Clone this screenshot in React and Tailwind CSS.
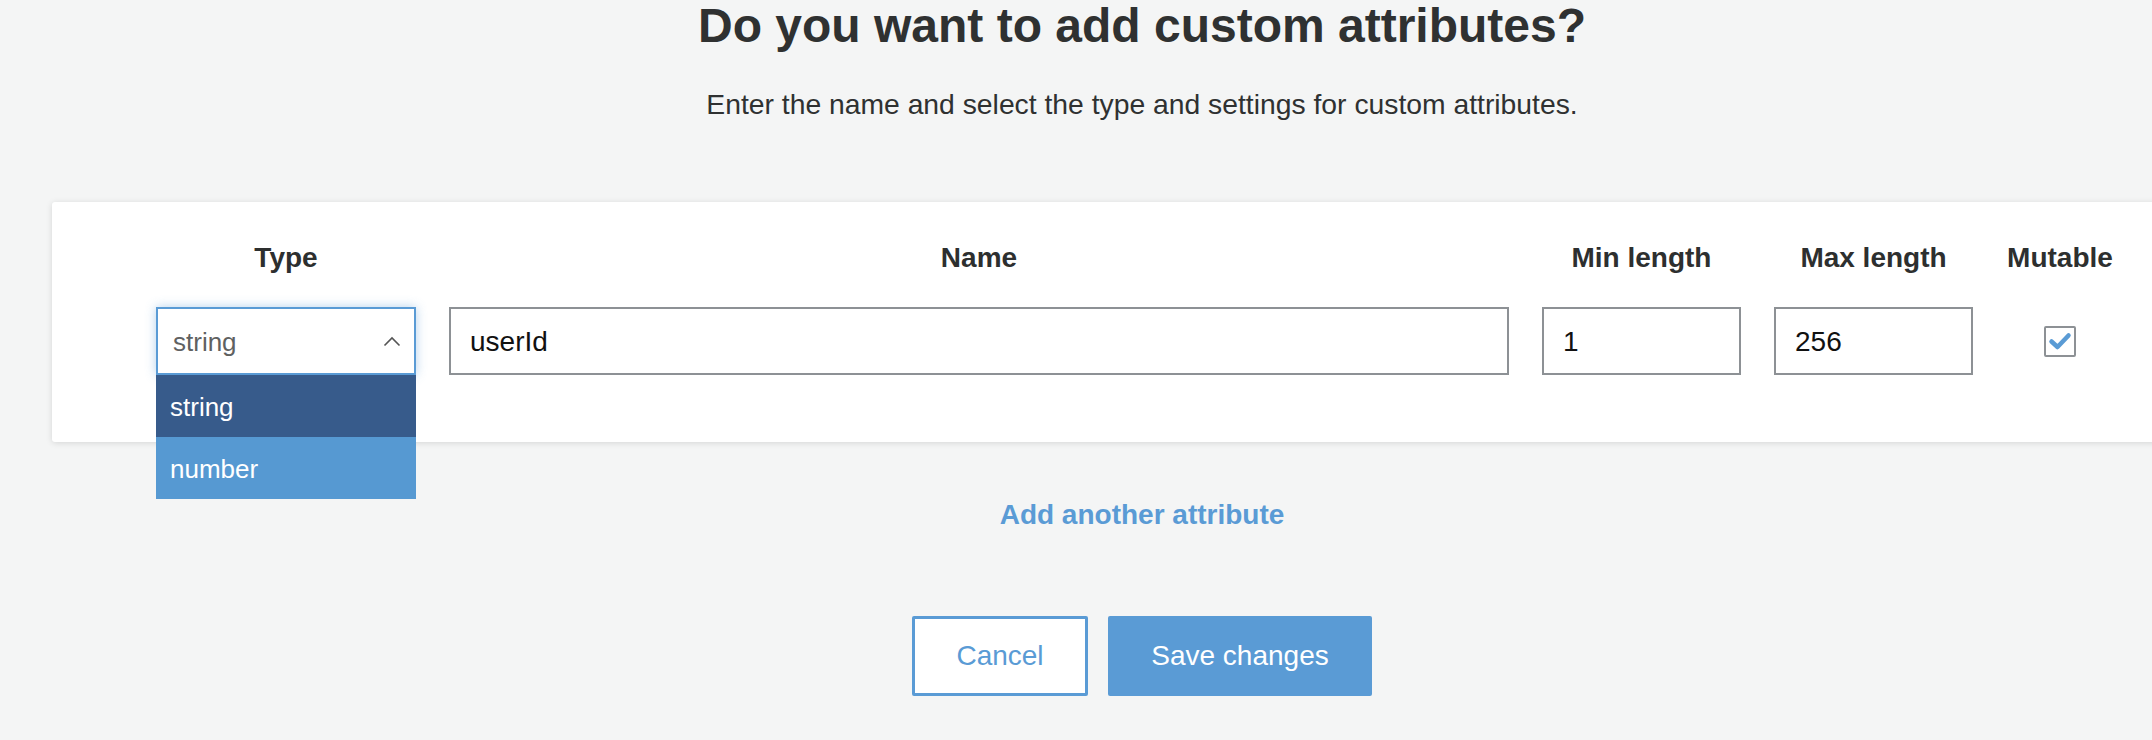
import React from "react";

const FONT = { fontFamily: '"Liberation Sans", Arial, Helvetica, sans-serif' };

function Header({ children }) {
  return (
    <div className="text-center text-[28px] leading-[32px] font-bold text-[#2d2f2f] whitespace-nowrap">
      {children}
    </div>
  );
}

function TextInput({ value }) {
  return (
    <div className="h-[68px] border-2 border-[#8d9195] bg-white flex items-center pl-[19px] pt-[2px] text-[28px] text-[#111]">
      {value}
    </div>
  );
}

export default function App() {
  return (
    <div className="w-full min-h-[740px] bg-[#f4f5f5] overflow-hidden" style={FONT}>
      <div className="w-[2180px] ml-[52px] flex flex-col items-center">
        <h1 className="pt-[2px] text-[48px] leading-[48px] font-bold text-[#2f3131] whitespace-nowrap">
          Do you want to add custom attributes?
        </h1>
        <p className="mt-[38px] text-[28.3px] leading-[32px] text-[#2f3131] whitespace-nowrap">
          Enter the name and select the type and settings for custom attributes.
        </p>

        <div className="mt-[82px] w-full bg-white rounded-[3px] shadow-[0_1px_6px_rgba(0,0,0,0.13)] pl-[104px] pt-[40px] pb-[67px]">
          <div className="grid grid-cols-[260px_1060px_199px_199px_108px] gap-x-[33px] gap-y-[33px]">
            <Header>Type</Header>
            <Header>Name</Header>
            <Header>Min length</Header>
            <Header>Max length</Header>
            <Header>Mutable</Header>

            <div className="relative">
              <div className="h-[68px] border-2 border-[#5a9bd5] bg-white shadow-[0_0_10px_rgba(90,155,213,0.45)] flex items-center justify-between pl-[15px] pr-[13px] text-[26px] text-[#5f6161]">
                <span className="pt-[3px]">string</span>
                <svg width="18" height="11" viewBox="0 0 18 11" fill="none">
                  <polyline points="1.5,9.5 9,2 16.5,9.5" stroke="#555" strokeWidth="1.6" />
                </svg>
              </div>
              <div className="absolute left-0 top-full w-full z-10">
                <div className="h-[62px] bg-[#375b8b] text-white text-[26px] flex items-center pl-[14px] pt-[3px]">
                  string
                </div>
                <div className="h-[62px] bg-[#5699d2] text-white text-[26px] flex items-center pl-[14px] pt-[3px]">
                  number
                </div>
              </div>
            </div>

            <TextInput value="userId" />
            <TextInput value="1" />
            <TextInput value="256" />

            <div className="h-[68px] flex items-center justify-center">
              <div className="w-[32px] h-[31px] border-2 border-[#8d9195] rounded-[2px] bg-white flex items-center justify-center">
                <svg width="24" height="20" viewBox="0 0 24 20" fill="none">
                  <polyline
                    points="3.5,10.5 9.5,16 20.5,4.5"
                    stroke="#5a9bd5"
                    strokeWidth="4.5"
                    strokeLinecap="round"
                    strokeLinejoin="round"
                  />
                </svg>
              </div>
            </div>
          </div>
        </div>

        <button className="mt-[57px] text-[28px] leading-[32px] font-bold text-[#5a9bd5] whitespace-nowrap">
          Add another attribute
        </button>

        <div className="mt-[85px] flex gap-[20px]">
          <button className="w-[176px] h-[80px] border-[3px] border-[#5a9bd5] bg-white rounded-[2px] text-[28px] text-[#5a9bd5]">
            Cancel
          </button>
          <button className="w-[264px] h-[80px] bg-[#5a9bd5] rounded-[2px] text-[28px] text-white">
            Save changes
          </button>
        </div>
      </div>
    </div>
  );
}
